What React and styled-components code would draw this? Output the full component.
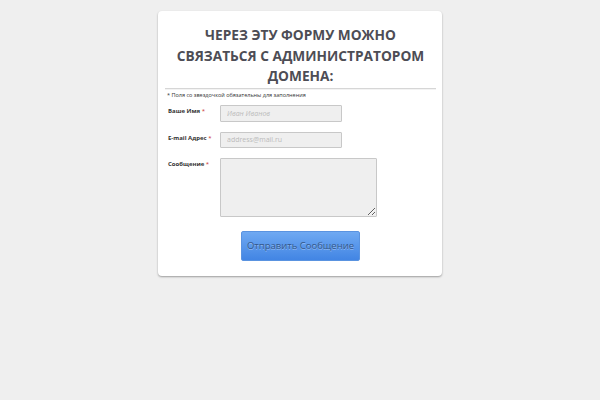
import React from 'react';
import styled, { createGlobalStyle } from 'styled-components';

const GlobalStyle = createGlobalStyle`
  html, body {
    margin: 0;
    padding: 0;
    background: #efefef;
    font-family: "Open Sans", "DejaVu Sans", sans-serif;
  }
`;

const Page = styled.div`
  width: 600px;
  height: 400px;
  padding-top: 11px;
  box-sizing: border-box;
`;

const Card = styled.div`
  width: 284px;
  margin: 0 auto;
  background: #fff;
  border-radius: 4px;
  box-shadow: 0 1px 2px rgba(0, 0, 0, 0.35);
  padding: 14px 6px 15px 7px;
  box-sizing: border-box;
`;

const Title = styled.h1`
  margin: 0;
  padding: 0 2px 1px;
  text-align: center;
  font-family: "Open Sans", sans-serif;
  font-weight: 700;
  font-size: 13.7px;
  line-height: 20.5px;
  color: #4d4d55;
  border-bottom: 1px solid #d6d6d6;
  box-shadow: 0 1px 0 #f3f3f3;
`;

const Note = styled.p`
  margin: 2px 0 0 2px;
  font-size: 5.5px;
  color: #333;
`;

const Row = styled.div`
  display: flex;
  align-items: flex-start;
  margin-top: ${(p) => p.$top}px;
`;

const Label = styled.label`
  width: 52px;
  padding-left: 3px;
  padding-top: 2px;
  font-size: 6px;
  font-weight: 700;
  color: #333;
  span { color: #c33; font-weight: 400; }
`;

const Input = styled.input`
  width: ${(p) => p.$w}px;
  height: ${(p) => p.$h}px;
  box-sizing: border-box;
  border: 1px solid #c8c8c8;
  background: #efefef;
  border-radius: 1px;
  padding: 0 6px;
  font-size: 7px;
  font-style: ${(p) => (p.$italic ? 'italic' : 'normal')};
  font-family: "Open Sans", sans-serif;
  color: #666;
  &::placeholder { color: #bbb; }
`;

const TextArea = styled.textarea`
  width: 157px;
  height: 59px;
  box-sizing: border-box;
  border: 1px solid #c8c8c8;
  background: #efefef;
  border-radius: 1px;
  margin: 0;
`;

const ButtonRow = styled.div`
  display: flex;
  padding-left: 76px;
  margin-top: 14px;
`;

const Button = styled.button`
  width: 119px;
  height: 30px;
  border: 1px solid #5a93e0;
  border-radius: 2px;
  background: linear-gradient(#6fa9f2, #4285e4);
  color: #34578a;
  text-shadow: 0 1px 0 rgba(255, 255, 255, 0.35);
  font-family: "Open Sans", sans-serif;
  font-size: 9.5px;
  padding: 0;
`;

export default function App() {
  return (
    <Page>
      <GlobalStyle />
      <Card>
        <Title>ЧЕРЕЗ ЭТУ ФОРМУ МОЖНО СВЯЗАТЬСЯ С АДМИНИСТРАТОРОМ ДОМЕНА:</Title>
        <Note>* Поля со звездочкой обязательны для заполнения</Note>
        <Row $top={6}>
          <Label>Ваше Имя <span>*</span></Label>
          <Input $w={122} $h={17} $italic placeholder="Иван Иванов" />
        </Row>
        <Row $top={10}>
          <Label>E-mail Адрес <span>*</span></Label>
          <Input $w={122} $h={16} placeholder="address@mail.ru" />
        </Row>
        <Row $top={10}>
          <Label>Сообщение <span>*</span></Label>
          <TextArea />
        </Row>
        <ButtonRow>
          <Button>Отправить Сообщение</Button>
        </ButtonRow>
      </Card>
    </Page>
  );
}
